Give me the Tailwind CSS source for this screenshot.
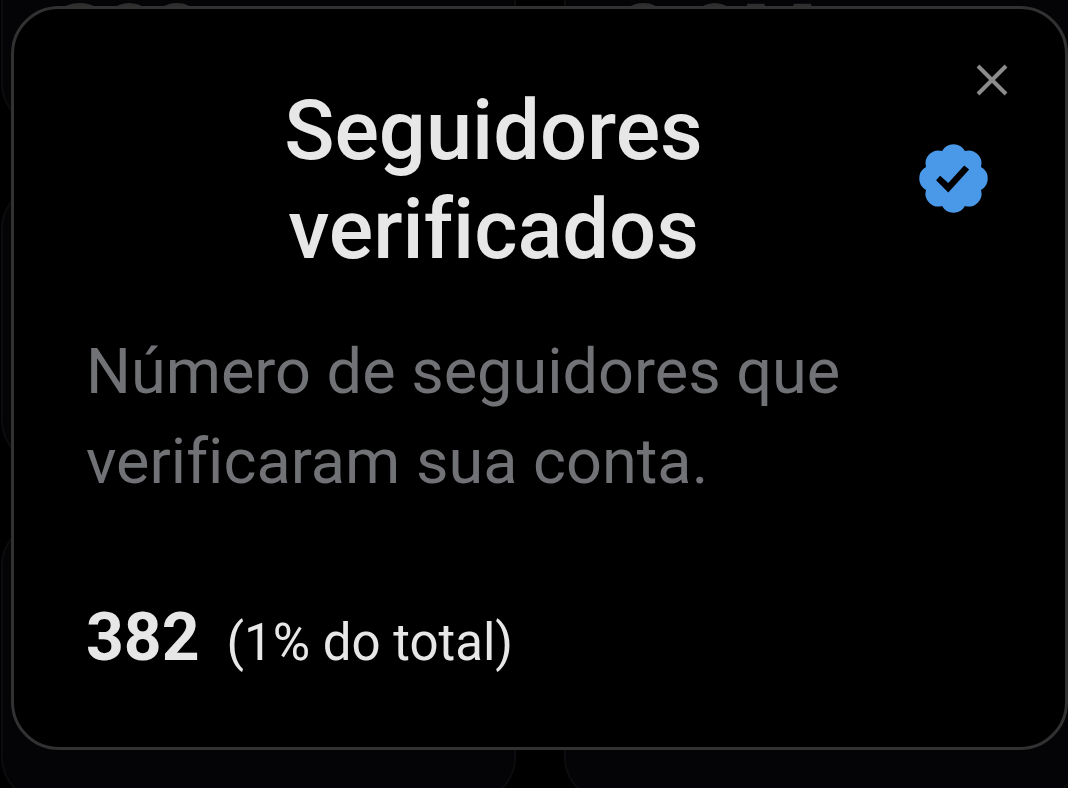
<!DOCTYPE html>
<html lang="pt-BR">
<head>
    <meta charset="UTF-8">
    <meta name="viewport" content="width=device-width, initial-scale=1.0">
    <title>Seguidores verificados</title>
    <script src="https://cdn.jsdelivr.net/npm/@tailwindcss/browser@4"></script>
</head>
<body class="relative bg-black text-[#e7e7e7] h-screen overflow-hidden font-[Roboto,sans-serif] [font-variant-ligatures:none]">

    <!-- Dimmed metric cards -->
    <div class="absolute inset-x-0 bottom-[-14px] grid grid-cols-2 auto-rows-[281px] gap-x-12 gap-y-14 pl-px -mr-[10px] text-[#2d2d2e] font-['Open_Sans',sans-serif]" aria-hidden="true">
        <div class="flex items-end rounded-[45px] border-2 border-[#0c0c0e] bg-[#040406] px-[54px] pb-11">
            <span class="text-[84px] leading-[100px] font-bold">382</span>
        </div>
        <div class="flex items-end rounded-[45px] border-2 border-[#0c0c0e] bg-[#040406] px-[54px] pb-11">
            <span class="text-[84px] leading-[100px] font-bold">2,9M</span>
        </div>
        <div class="rounded-[45px] border-2 border-[#0c0c0e] bg-[#040406]"></div>
        <div class="rounded-[45px] border-2 border-[#0c0c0e] bg-[#040406]"></div>
        <div class="rounded-[45px] border-2 border-[#0c0c0e] bg-[#040406]"></div>
        <div class="rounded-[45px] border-2 border-[#0c0c0e] bg-[#040406]"></div>
    </div>

    <!-- Dialog -->
    <div class="relative pt-[6px] pl-[11px]">
        <div role="dialog" aria-labelledby="dialog-title" class="relative rounded-[48px] border-3 border-[#313132] bg-black pl-[72px] pr-[73px] pt-[72px] pb-[59px]">
            <button type="button" aria-label="Fechar" class="absolute top-[47px] right-[49px] p-1 text-[#8b8b8b]">
                <svg class="size-10" viewBox="0 0 40 40" fill="none" stroke="currentColor" stroke-width="4">
                    <path d="M6 6l28 28M34 6L6 34"></path>
                </svg>
            </button>

            <div class="flex items-center">
                <h1 id="dialog-title" class="flex-1 pl-18 pr-[86px] text-center text-[83px] leading-[99px] font-medium">Seguidores verificados</h1>
                <svg class="size-[77px] shrink-0" viewBox="-38.5 -36.5 77 77">
                    <path fill="#4a99e9" d="M-11.4-27.5A13 13 0 0 1 11.4-27.5A13 13 0 0 1 27.5-11.4A13 13 0 0 1 27.5 11.4A13 13 0 0 1 11.4 27.5A13 13 0 0 1-11.4 27.5A13 13 0 0 1-27.5 11.4A13 13 0 0 1-27.5-11.4A13 13 0 0 1-11.4-27.5z"></path>
                    <path fill="#000" d="M-17.4 1.7L-13.4-2.8L-5.2 4.6L10.7-13L15.7-9L-5.2 14z"></path>
                </svg>
            </div>

            <p class="mt-12 text-[63px] leading-[90px] text-[#717276]">Número de seguidores que verificaram sua conta.</p>

            <p class="mt-[86px] flex items-baseline gap-[27px] leading-[90px]">
                <span class="text-[66px] font-bold">382</span>
                <span class="text-[51px]">(1% do total)</span>
            </p>
        </div>
    </div>
</body>
</html>
